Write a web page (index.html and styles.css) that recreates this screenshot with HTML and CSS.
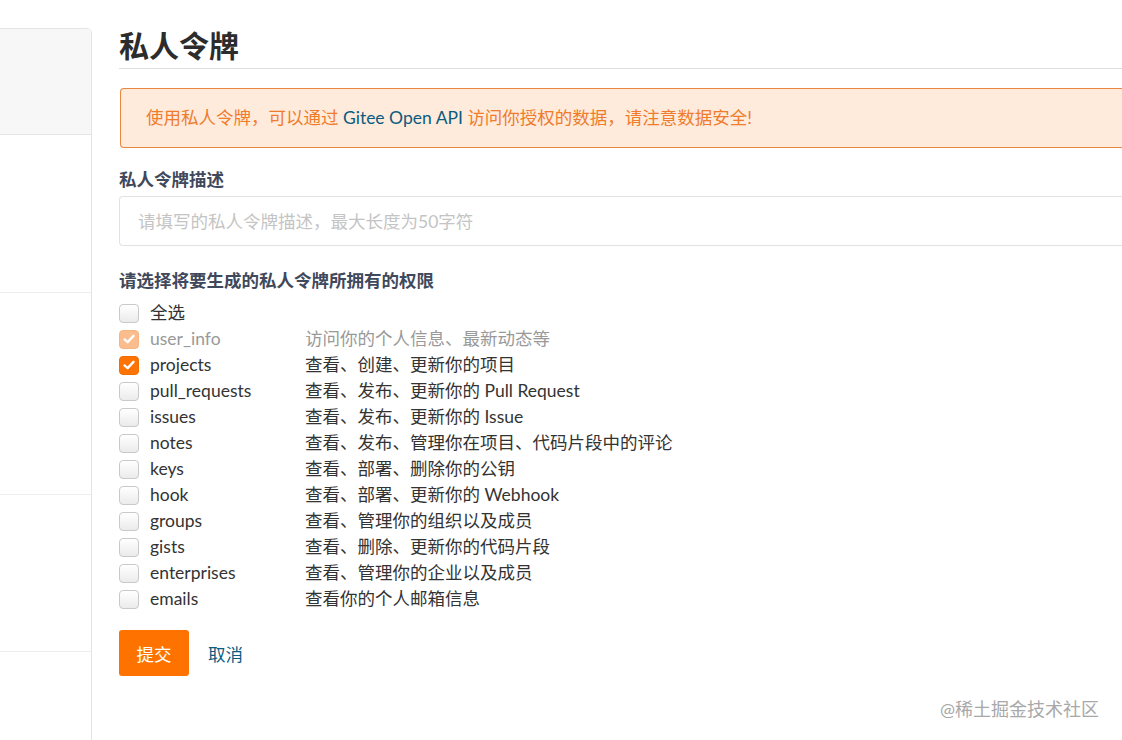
FILE: index.html
```html
<!DOCTYPE html>
<html lang="zh-CN">
<head>
<meta charset="utf-8">
<title>私人令牌</title>
<link rel="stylesheet" href="styles.css">
</head>
<body>
<div class="page">
  <aside class="sidebar">
    <div class="side-head"></div>
    <div class="side-sec s1"></div>
    <div class="side-sec s2"></div>
    <div class="side-sec s3"></div>
    <div class="side-sec s4"></div>
  </aside>
  <main class="main">
    <h1 class="title">私人令牌</h1>
    <div class="alert">使用私人令牌，可以通过 <span class="alert-link">Gitee Open API</span> 访问你授权的数据，请注意数据安全!</div>
    <div class="field-label">私人令牌描述</div>
    <input class="text-input" type="text" placeholder="请填写的私人令牌描述，最大长度为50字符">
    <div class="field-label second">请选择将要生成的私人令牌所拥有的权限</div>
    <div class="perm-list">
      <div class="perm-row"><span class="cbox"></span><span class="perm-name">全选</span></div>
      <div class="perm-row disabled"><span class="cbox checked faded"><svg viewBox="0 0 20 20"><polyline points="5,10.5 8.5,13.5 15,6.5"/></svg></span><span class="perm-name">user_info</span><span class="perm-desc">访问你的个人信息、最新动态等</span></div>
      <div class="perm-row"><span class="cbox checked"><svg viewBox="0 0 20 20"><polyline points="5,10.5 8.5,13.5 15,6.5"/></svg></span><span class="perm-name">projects</span><span class="perm-desc">查看、创建、更新你的项目</span></div>
      <div class="perm-row"><span class="cbox"></span><span class="perm-name">pull_requests</span><span class="perm-desc">查看、发布、更新你的 Pull Request</span></div>
      <div class="perm-row"><span class="cbox"></span><span class="perm-name">issues</span><span class="perm-desc">查看、发布、更新你的 Issue</span></div>
      <div class="perm-row"><span class="cbox"></span><span class="perm-name">notes</span><span class="perm-desc">查看、发布、管理你在项目、代码片段中的评论</span></div>
      <div class="perm-row"><span class="cbox"></span><span class="perm-name">keys</span><span class="perm-desc">查看、部署、删除你的公钥</span></div>
      <div class="perm-row"><span class="cbox"></span><span class="perm-name">hook</span><span class="perm-desc">查看、部署、更新你的 Webhook</span></div>
      <div class="perm-row"><span class="cbox"></span><span class="perm-name">groups</span><span class="perm-desc">查看、管理你的组织以及成员</span></div>
      <div class="perm-row"><span class="cbox"></span><span class="perm-name">gists</span><span class="perm-desc">查看、删除、更新你的代码片段</span></div>
      <div class="perm-row"><span class="cbox"></span><span class="perm-name">enterprises</span><span class="perm-desc">查看、管理你的企业以及成员</span></div>
      <div class="perm-row"><span class="cbox"></span><span class="perm-name">emails</span><span class="perm-desc">查看你的个人邮箱信息</span></div>
    </div>
    <div class="actions">
      <button class="btn-submit" type="button">提交</button>
      <a class="btn-cancel" href="#">取消</a>
    </div>
  </main>
</div>
<div class="watermark">@稀土掘金技术社区</div>
</body>
</html>
```

FILE: styles.css
```css
html, body {
  margin: 0;
  padding: 0;
  background: #fff;
}
body {
  width: 1122px;
  height: 740px;
  overflow: hidden;
  position: relative;
  font-family: "Lato", "Noto Sans CJK SC", sans-serif;
  font-size: 17.5px;
  color: #333;
}
.page {
  display: flex;
  align-items: flex-start;
  width: 1122px;
  height: 740px;
}
.sidebar {
  box-sizing: border-box;
  width: 92px;
  margin-top: 28px;
  height: 712px;
  border-top: 1px solid #e5e5e5;
  border-right: 1px solid #e3e3e3;
  border-top-right-radius: 5px;
  display: flex;
  flex-direction: column;
  flex-shrink: 0;
}
.side-head {
  height: 105px;
  background: #f7f7f7;
  border-bottom: 1px solid #e6e6e6;
  border-top-right-radius: 5px;
}
.side-sec {
  border-bottom: 1px solid #eeeeee;
}
.s1 { height: 157px; }
.s2 { height: 201px; }
.s3 { height: 156px; }
.s4 { flex: 1; border-bottom: none; }

.main {
  margin-left: 27px;
  flex: 1;
  min-width: 0;
}
.title {
  margin: 25px 0 0;
  font-size: 30px;
  line-height: 40px;
  font-weight: 700;
  color: #2c2c2c;
  padding-bottom: 3px;
  border-bottom: 1px solid #dedede;
}
.alert {
  margin-top: 19px;
  margin-left: 1px;
  border: 1px solid #ea8640;
  border-right: none;
  border-radius: 4px 0 0 4px;
  background: #feebdc;
  color: #ef7b2b;
  padding: 17px 25px;
  line-height: 24px;
  white-space: nowrap;
}
.alert-link {
  color: #0b5c80;
}
.field-label {
  margin-top: 20px;
  font-weight: 700;
  line-height: 24px;
  color: #40485b;
}
.field-label.second {
  margin-top: 23px;
}
.text-input {
  display: block;
  box-sizing: border-box;
  margin-top: 4px;
  width: 100%;
  height: 50px;
  border: 1px solid #e2e2e2;
  border-right: none;
  border-radius: 4px 0 0 4px;
  padding: 0 18px;
  font-family: inherit;
  font-size: 17.5px;
  color: #333;
  outline: none;
}
.text-input::placeholder {
  color: #c4c4c4;
}
.perm-list {
  margin-top: 7px;
  display: flex;
  flex-direction: column;
}
.perm-row {
  display: flex;
  align-items: center;
  height: 26px;
  line-height: 26px;
  color: #333;
}
.perm-row.disabled {
  color: #999;
}
.cbox {
  box-sizing: border-box;
  width: 20px;
  height: 19px;
  border: 1px solid #c9c9c9;
  border-radius: 4px;
  background: linear-gradient(#ffffff, #ebebeb);
  margin-right: 11px;
  display: flex;
  align-items: center;
  justify-content: center;
  flex-shrink: 0;
}
.cbox.checked {
  background: #fd7404;
  border-color: #f06d00;
}
.cbox.checked.faded {
  background: #fbbd8d;
  border-color: #f8b482;
}
.cbox svg {
  width: 18px;
  height: 18px;
}
.cbox svg polyline {
  fill: none;
  stroke: #fff;
  stroke-width: 2.6;
  stroke-linecap: round;
  stroke-linejoin: round;
}
.perm-name {
  width: 155px;
  flex-shrink: 0;
}
.actions {
  margin-top: 18px;
  display: flex;
  align-items: center;
}
.btn-submit {
  width: 70px;
  height: 46px;
  border: none;
  border-radius: 3px;
  background: #fe7300;
  color: #fff;
  font-family: inherit;
  font-size: 17.5px;
  padding: 0;
  cursor: pointer;
}
.btn-cancel {
  margin-left: 19px;
  color: #0b5c80;
  text-decoration: none;
}
.watermark {
  position: absolute;
  left: 940px;
  top: 696px;
  line-height: 26px;
  font-size: 18px;
  color: #a8a8a8;
  text-shadow: 0 0 1px #fff;
}
```
